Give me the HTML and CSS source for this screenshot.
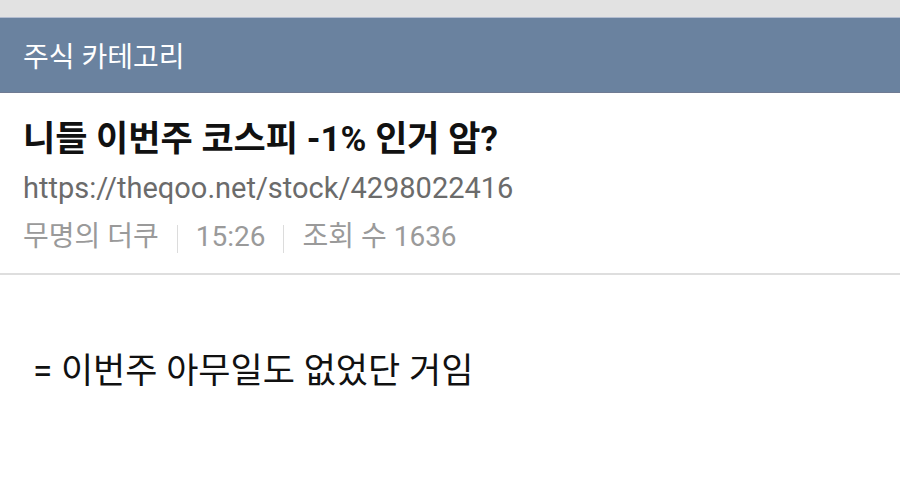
FILE: index.html
```html
<!DOCTYPE html>
<html lang="ko">
<head>
<meta charset="utf-8">
<title>주식 카테고리</title>
<link rel="stylesheet" href="styles.css">
</head>
<body>
<div class="topbar"></div>
<header class="cat-header">주식 카테고리</header>
<section class="post-head">
  <h1 class="post-title">니들 이번주 코스피 -1% 인거 암?</h1>
  <div class="post-url">https://theqoo.net/stock/4298022416</div>
  <div class="post-meta">
    <span>무명의 더쿠</span>
    <span class="sep"></span>
    <span>15:26</span>
    <span class="sep"></span>
    <span>조회 수 1636</span>
  </div>
</section>
<article class="post-body">
  <p>= 이번주 아무일도 없었단 거임</p>
</article>
</body>
</html>
```

FILE: styles.css
```css
html, body {
  margin: 0;
  padding: 0;
  background: #ffffff;
  font-family: Roboto, "Noto Sans CJK KR", sans-serif;
}

.topbar {
  height: 17px;
  background: #e2e2e2;
  border-bottom: 1px solid #b3bdd0;
}

.cat-header {
  height: 75px;
  box-sizing: border-box;
  display: flex;
  align-items: center;
  padding-left: 23px;
  background: #6a829f;
  border-bottom: 1px solid #6f7b93;
  color: #ffffff;
  font-size: 28px;
}

.post-head {
  padding: 23px 23px 0;
  border-bottom: 2px solid #dedede;
  height: 182px;
  box-sizing: border-box;
}

.post-title {
  margin: 0;
  font-size: 35px;
  font-weight: 700;
  color: #111111;
  line-height: 48px;
}

.post-url {
  font-size: 29px;
  color: #6b6b6b;
  line-height: 48px;
}

.post-meta {
  display: flex;
  align-items: center;
  font-size: 28px;
  color: #9a9a9a;
  line-height: 50px;
}

.post-meta .sep {
  width: 1px;
  height: 28px;
  margin: 4px 18px 0;
  background: #dcdcdc;
}

.post-body {
  padding: 0 33px;
}

.post-body p {
  margin: 67px 0 0;
  font-size: 35px;
  color: #111111;
}
```
